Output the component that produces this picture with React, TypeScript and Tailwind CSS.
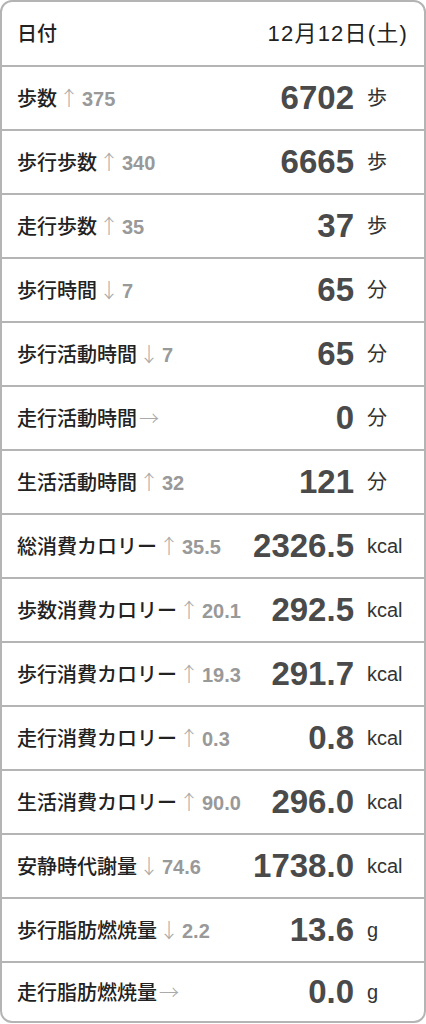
import React from "react";

type Row = {
  label: string;
  arrow: "↑" | "↓" | "→";
  delta?: string;
  value: string;
  unit: string;
};

const rows: Row[] = [
  { label: "歩数", arrow: "↑", delta: "375", value: "6702", unit: "歩" },
  { label: "歩行歩数", arrow: "↑", delta: "340", value: "6665", unit: "歩" },
  { label: "走行歩数", arrow: "↑", delta: "35", value: "37", unit: "歩" },
  { label: "歩行時間", arrow: "↓", delta: "7", value: "65", unit: "分" },
  { label: "歩行活動時間", arrow: "↓", delta: "7", value: "65", unit: "分" },
  { label: "走行活動時間", arrow: "→", value: "0", unit: "分" },
  { label: "生活活動時間", arrow: "↑", delta: "32", value: "121", unit: "分" },
  { label: "総消費カロリー", arrow: "↑", delta: "35.5", value: "2326.5", unit: "kcal" },
  { label: "歩数消費カロリー", arrow: "↑", delta: "20.1", value: "292.5", unit: "kcal" },
  { label: "歩行消費カロリー", arrow: "↑", delta: "19.3", value: "291.7", unit: "kcal" },
  { label: "走行消費カロリー", arrow: "↑", delta: "0.3", value: "0.8", unit: "kcal" },
  { label: "生活消費カロリー", arrow: "↑", delta: "90.0", value: "296.0", unit: "kcal" },
  { label: "安静時代謝量", arrow: "↓", delta: "74.6", value: "1738.0", unit: "kcal" },
  { label: "歩行脂肪燃焼量", arrow: "↓", delta: "2.2", value: "13.6", unit: "g" },
  { label: "走行脂肪燃焼量", arrow: "→", value: "0.0", unit: "g" },
];

export default function App() {
  return (
    <div className="h-[1024px] w-[426px] bg-white font-['Liberation_Sans','Noto_Sans_CJK_JP',sans-serif]">
      <div className="overflow-hidden rounded-[12px] border-2 border-[#b4b4b4] bg-white">
        <div className="flex h-[63px] items-center justify-between pl-[15px] pr-[16px] text-[#222]">
          <span className="text-[20px] font-medium">日付</span>
          <span className="text-[22px] tracking-[1.2px]">12月12日(土)</span>
        </div>
        {rows.map((r, i) => (
          <div
            key={r.label}
            className={
              "flex items-center border-t-2 border-[#b4b4b4] pl-[15px] " +
              (i === rows.length - 1 ? "h-[60px]" : "h-[64px]")
            }
          >
            <div className="flex items-baseline whitespace-nowrap">
              <span className="text-[20px] font-medium text-[#222]">{r.label}</span>
              <span className="ml-[2px] font-['Noto_Sans_CJK_JP',sans-serif] text-[20px] font-light text-[#aaa]">
                {r.arrow}
              </span>
              {r.delta && (
                <span className="ml-[3px] text-[20px] font-bold text-[#999]">{r.delta}</span>
              )}
            </div>
            <span className="ml-auto mr-[13px] text-[33px] font-bold text-[#4a4a4a]">
              {r.value}
            </span>
            <span className="w-[57px] text-[20px] text-[#333]">{r.unit}</span>
          </div>
        ))}
      </div>
    </div>
  );
}
